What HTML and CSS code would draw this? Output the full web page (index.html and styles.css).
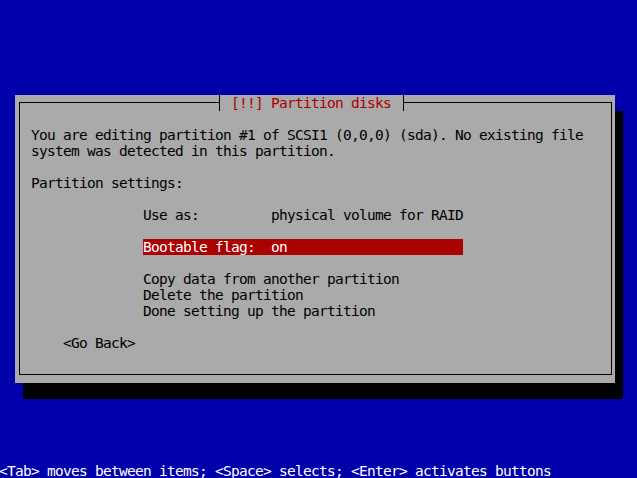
FILE: index.html
```html
<!DOCTYPE html>
<html>
<head>
<meta charset="utf-8">
<title>Partition disks</title>
<link rel="stylesheet" href="styles.css">
</head>
<body>
<div class="screen">
  <div class="dialog">
    <div class="title">[!!] Partition disks</div>
    <div class="frame">
      <p class="msg">You are editing partition #1 of SCSI1 (0,0,0) (sda). No existing file<br>system was detected in this partition.</p>
      <p class="label">Partition settings:</p>
      <ul class="menu">
        <li class="item"><span class="key">Use as:</span><span class="val">physical volume for RAID</span></li>
        <li class="item spaced sel"><span class="key">Bootable flag:</span><span class="val">on</span></li>
        <li class="item spaced">Copy data from another partition</li>
        <li class="item">Delete the partition</li>
        <li class="item">Done setting up the partition</li>
      </ul>
      <div class="buttons"><span class="btn">&lt;Go Back&gt;</span></div>
    </div>
  </div>
  <div class="help">&lt;Tab&gt; moves between items; &lt;Space&gt; selects; &lt;Enter&gt; activates buttons</div>
</div>
</body>
</html>
```
FILE: styles.css
```css
html, body {
  margin: 0;
  padding: 0;
  background: #0000aa;
  overflow: hidden;
}

.screen {
  width: 640px;
  height: 480px;
  margin: -1px 0 0 -1px;
  background: #0000aa;
  font-family: "DejaVu Sans Mono", monospace;
  font-size: 14.5px;
  letter-spacing: -0.73px;
  line-height: 16px;
  white-space: pre;
  display: flex;
  flex-direction: column;
  align-items: flex-start;
}

.dialog {
  position: relative;
  margin: 96px 0 0 16px;
  width: 600px;
  height: 288px;
  box-sizing: border-box;
  padding: 7px 3px 8px 4px;
  background: #aaaaaa;
  box-shadow: 8px 16px 0 #000;
  color: #000;
  display: flex;
}

.title {
  position: absolute;
  top: 0;
  left: 204px;
  width: 185px;
  height: 16px;
  box-sizing: border-box;
  padding: 0 12px 0 11px;
  border-left: 1px solid #000;
  border-right: 1px solid #000;
  background: #aaaaaa;
  color: #aa0000;
}

.frame {
  flex: 1;
  border: 1px solid #000;
  padding: 24px 0 0 11px;
  display: flex;
  flex-direction: column;
  align-items: flex-start;
}

.msg, .label {
  margin: 0;
}

.label {
  margin-top: 16px;
}

.menu {
  list-style: none;
  margin: 16px 0 0 112px;
  padding: 0;
  display: flex;
  flex-direction: column;
}

.item {
  height: 16px;
  width: 320px;
  display: flex;
}

.item.spaced {
  margin-top: 16px;
}

.key {
  width: 128px;
  flex: none;
}

.sel {
  background: #aa0000;
  color: #ffffff;
}

.buttons {
  margin: 16px 0 0 32px;
}

.help {
  margin-top: 80px;
  color: #ffffff;
}
```
